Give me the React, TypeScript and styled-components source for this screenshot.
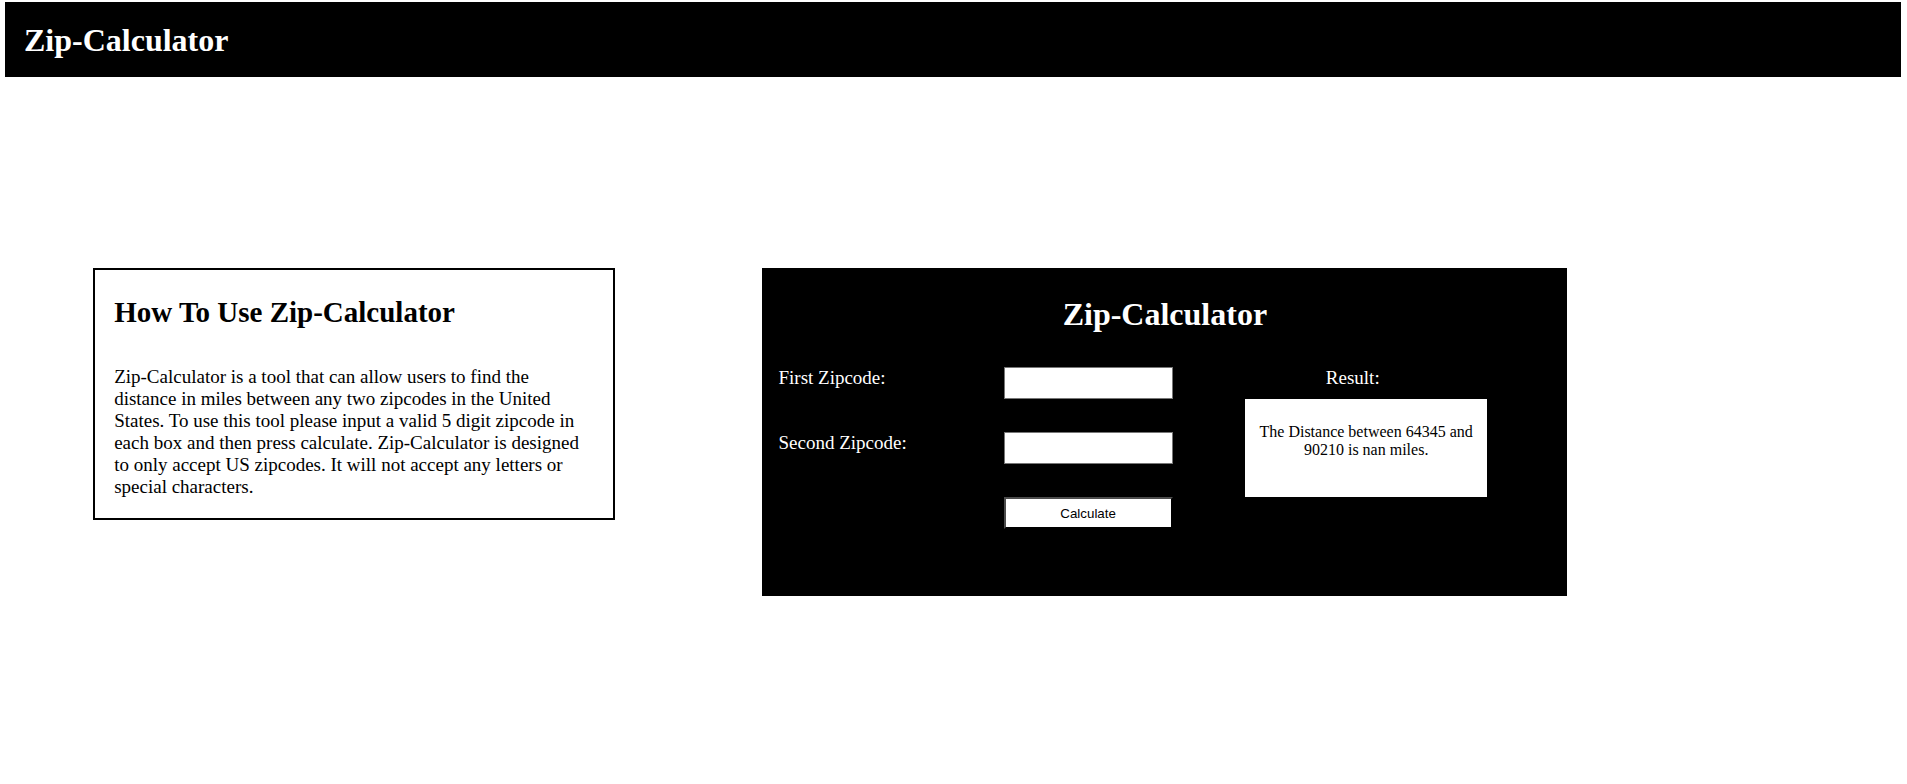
import { useState } from "react";
import type { FormEvent } from "react";
import styled, { createGlobalStyle } from "styled-components";

const GlobalStyle = createGlobalStyle`
  *, *::before, *::after { box-sizing: border-box; }
  body {
    margin: 0;
    background: #fff;
    color: #000;
    font-family: "Liberation Serif", "Times New Roman", serif;
    font-size: 19px;
    line-height: 22px;
  }
`;

const Page = styled.div`
  padding: 2px 6px 20px 5px;
`;

const Header = styled.header`
  padding: 20px 19px 18px;
  background: #000;
  color: #fff;
`;

const Title = styled.h1`
  margin: 0;
  font-size: 32px;
  line-height: 37px;
`;

const Main = styled.main`
  display: grid;
  grid-template-columns: 522fr 805fr;
  column-gap: 10%;
  align-items: start;
  margin: 191px 17.6% 0 4.65%;
`;

const Guide = styled.section`
  padding: 26px 19px 20px;
  border: 2px solid #000;
`;

const GuideTitle = styled.h2`
  margin: 0 0 37px;
  font-size: 29px;
  line-height: 33px;
`;

const GuideText = styled.p`
  margin: 0;
`;

const Calculator = styled.section`
  padding: 28px 0 67px;
  background: #000;
  color: #fff;
`;

const CalculatorTitle = styled.h2`
  margin: 0 0 34px;
  font-size: 32px;
  line-height: 37px;
  text-align: center;
`;

const Columns = styled.div`
  display: grid;
  grid-template-columns: 394fr 268fr;
  column-gap: 46px;
  align-items: start;
  padding: 0 10% 0 16px;
`;

const Form = styled.form`
  display: grid;
  grid-template-columns: 225fr 169fr;
  grid-auto-rows: 32px;
  row-gap: 33px;
`;

const ZipInput = styled.input`
  width: 100%;
  min-width: 0;
  padding: 1px 6px;
  border: 1px solid #767676;
  border-radius: 0;
  background: #fff;
  font-family: "Liberation Sans", Arial, sans-serif;
`;

const CalculateButton = styled.button`
  grid-column: 2;
  padding: 1px 6px;
  border: 2px solid;
  border-color: #4c4c4c #000 #000 #4c4c4c;
  border-radius: 0;
  background: #fff;
  color: #000;
  font-family: "Liberation Sans", Arial, sans-serif;
`;

const Result = styled.div`
  text-align: center;
`;

const ResultLabel = styled.div`
  margin-bottom: 10px;
`;

const ResultBox = styled.output`
  display: block;
  min-height: 98px;
  margin-left: 10%;
  padding: 24px 10px;
  background: #fff;
  color: #000;
  font-size: 16px;
  line-height: 18px;
`;

export default function App() {
  const [first, setFirst] = useState("");
  const [second, setSecond] = useState("");
  const [pair, setPair] = useState(["64345", "90210"]);

  const calculate = (event: FormEvent) => {
    event.preventDefault();
    setPair([first, second]);
  };

  return (
    <>
      <GlobalStyle />
      <Page>
        <Header>
          <Title>Zip-Calculator</Title>
        </Header>
        <Main>
          <Guide>
            <GuideTitle>How To Use Zip-Calculator</GuideTitle>
            <GuideText>
              Zip-Calculator is a tool that can allow users to find the distance in miles between any
              two zipcodes in the United States. To use this tool please input a valid 5 digit zipcode
              in each box and then press calculate. Zip-Calculator is designed to only accept US
              zipcodes. It will not accept any letters or special characters.
            </GuideText>
          </Guide>
          <Calculator>
            <CalculatorTitle>Zip-Calculator</CalculatorTitle>
            <Columns>
              <Form id="zip-form" onSubmit={calculate}>
                <label htmlFor="first-zip">First Zipcode:</label>
                <ZipInput
                  id="first-zip"
                  inputMode="numeric"
                  maxLength={5}
                  pattern="[0-9]{5}"
                  required
                  value={first}
                  onChange={(event) => setFirst(event.target.value)}
                />
                <label htmlFor="second-zip">Second Zipcode:</label>
                <ZipInput
                  id="second-zip"
                  inputMode="numeric"
                  maxLength={5}
                  pattern="[0-9]{5}"
                  required
                  value={second}
                  onChange={(event) => setSecond(event.target.value)}
                />
                <CalculateButton type="submit">Calculate</CalculateButton>
              </Form>
              <Result>
                <ResultLabel id="result-label">Result:</ResultLabel>
                <ResultBox form="zip-form" aria-labelledby="result-label">
                  The Distance between {pair[0]} and {pair[1]} is nan miles.
                </ResultBox>
              </Result>
            </Columns>
          </Calculator>
        </Main>
      </Page>
    </>
  );
}
